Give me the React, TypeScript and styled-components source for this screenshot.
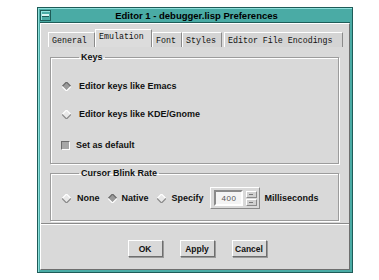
import React from 'react';
import styled, { createGlobalStyle } from 'styled-components';

const Global = createGlobalStyle`
  html, body { margin: 0; padding: 0; background: #ffffff; }
  body { font-family: "Liberation Sans", "DejaVu Sans", sans-serif; font-size: 9px; color: #000; }
`;

const Page = styled.div`
  padding: 7px 0 0 37px;
  width: 379px;
  height: 280px;
  box-sizing: border-box;
`;

const Frame = styled.div`
  width: 316px;
  height: 266px;
  box-sizing: border-box;
  border: 1px solid #1e5c58;
  background: #4aaba5;
  padding: 1px 2px 2px 2px;
  display: flex;
  flex-direction: column;
  box-shadow: inset 1px 1px 0 #8fe0dc;
`;

const TitleBar = styled.div`
  height: 13px;
  display: flex;
  align-items: center;
  border-bottom: 1px solid #1e5c58;
`;

const MenuBox = styled.div`
  width: 11px;
  height: 11px;
  box-sizing: border-box;
  border: 1px solid #1e5c58;
  box-shadow: inset 1px 1px 0 #8fe0dc;
  display: flex;
  align-items: center;
  justify-content: center;
  &::after {
    content: '';
    width: 7px;
    height: 2px;
    background: #d9f5f3;
    border-bottom: 1px solid #1e5c58;
  }
`;

const Title = styled.div`
  flex: 1;
  text-align: center;
  font-weight: bold;
  font-size: 9.5px;
  padding-right: 8px;
  white-space: nowrap;
`;

const Body = styled.div`
  flex: 1;
  background: #d9d9d9;
  border: 1px solid #6e6e6e;
  border-top-color: #ffffff;
  border-left-color: #ffffff;
  display: flex;
  flex-direction: column;
`;

const Tabs = styled.div`
  display: flex;
  align-items: flex-end;
  height: 18px;
  margin-top: 5px;
  padding-left: 7px;
`;

const Tab = styled.div<{ $active?: boolean; $w: number; $gap?: number }>`
  width: ${({ $w }) => $w}px;
  margin-left: ${({ $gap }) => $gap ?? 0}px;
  height: ${({ $active }) => ($active ? 18 : 15)}px;
  box-sizing: border-box;
  padding: 0 3px;
  display: flex;
  align-items: ${({ $active }) => ($active ? 'flex-start' : 'center')};
  padding-top: ${({ $active }) => ($active ? 2 : 0)}px;
  border-left: 1px solid #ffffff;
  border-top: 1px solid #ffffff;
  border-right: 1px solid #8a8a8a;
  background: ${({ $active }) => ($active ? '#dcdcdc' : '#d4d4d4')};
  font-family: "Liberation Mono", "DejaVu Sans Mono", monospace;
  font-size: 8.3px;
  white-space: nowrap;
  overflow: hidden;
  color: #111;
`;

const Panel = styled.div`
  flex: 1;
  display: flex;
  flex-direction: column;
  padding: 5px 10px 0 9px;
  gap: 4px;
`;

const Group = styled.fieldset<{ $h: number }>`
  margin: 0;
  height: ${({ $h }) => $h}px;
  box-sizing: border-box;
  border: 1px solid #9c9c9c;
  box-shadow: 1px 1px 0 #ffffff, inset 1px 1px 0 #ffffff;
  padding: 0 0 0 11px;
  display: flex;
  flex-direction: column;
`;

const Legend = styled.legend`
  padding: 0 2px;
  margin-left: 17px;
  font-size: 9px;
  font-weight: bold;
  color: #111;
`;

const Option = styled.label<{ $top: number; $gap?: number }>`
  display: flex;
  align-items: center;
  gap: ${({ $gap }) => $gap ?? 6}px;
  margin-top: ${({ $top }) => $top}px;
  font-weight: bold;
  font-size: 9px;
  color: #111;
  white-space: nowrap;
`;

const Row = styled.div`
  display: flex;
  align-items: center;
  margin-top: 9px;
  gap: 8px;
`;

const Radio = ({ on }: { on?: boolean }) => (
  <svg width="9" height="9" viewBox="0 0 9 9">
    <polygon points="4.5,0 9,4.5 4.5,9 0,4.5" fill={on ? '#9a9a9a' : '#e8e8e8'} />
    <polyline points="0,4.5 4.5,0 9,4.5" fill="none" stroke={on ? '#6a6a6a' : '#ffffff'} strokeWidth="1.2" />
    <polyline points="0,4.5 4.5,9 9,4.5" fill="none" stroke={on ? '#ffffff' : '#8a8a8a'} strokeWidth="1.2" />
  </svg>
);

const Check = styled.span`
  width: 9px;
  height: 9px;
  box-sizing: border-box;
  background: #a8a8a8;
  border: 1px solid #6e6e6e;
  border-right-color: #ffffff;
  border-bottom-color: #ffffff;
  margin-left: -1px;
`;

const SpinWrap = styled.div`
  display: flex;
  align-items: center;
  margin-left: -2px;
  gap: 3px;
  border: 1px solid #ffffff;
  border-right-color: #8a8a8a;
  border-bottom-color: #8a8a8a;
  padding: 2px 2px 2px 3px;
  height: 22px;
  box-sizing: border-box;
  width: 50px;
`;

const Field = styled.div`
  width: 30px;
  height: 16px;
  box-sizing: border-box;
  background: #f4f4f4;
  border: 2px solid #8a8a8a;
  border-right-color: #ffffff;
  border-bottom-color: #ffffff;
  font-size: 8px;
  color: #555;
  display: flex;
  align-items: center;
  padding-left: 6px;
  letter-spacing: 0.5px;
`;

const Arrows = styled.div`
  display: flex;
  flex-direction: column;
  gap: 1px;
`;

const Arrow = styled.div`
  width: 11px;
  height: 7px;
  box-sizing: border-box;
  border: 1px solid #ffffff;
  border-right-color: #8a8a8a;
  border-bottom-color: #8a8a8a;
  background: #d0d0d0;
  display: flex;
  align-items: center;
  justify-content: center;
  &::after {
    content: '';
    width: 4px;
    height: 1px;
    background: #777;
  }
`;

const Unit = styled.span`
  font-weight: bold;
  font-size: 9px;
  color: #111;
  margin-left: -3px;
`;

const Separator = styled.div`
  height: 0;
  border-top: 1px solid #8a8a8a;
  border-bottom: 1px solid #ffffff;
  margin-top: 2px;
`;

const Buttons = styled.div`
  display: flex;
  justify-content: center;
  gap: 17px;
  padding: 15px 0 0 4px;
`;

const Button = styled.button`
  width: 35px;
  height: 17px;
  box-sizing: border-box;
  padding: 0;
  background: #d9d9d9;
  border: 1px solid #ffffff;
  border-right-color: #6e6e6e;
  border-bottom-color: #6e6e6e;
  box-shadow: 1px 1px 0 #9a9a9a;
  font-family: "Liberation Sans", "DejaVu Sans", sans-serif;
  font-size: 8.5px;
  font-weight: bold;
  color: #111;
`;

export default function App() {
  return (
    <Page>
      <Global />
      <Frame>
        <TitleBar>
          <MenuBox />
          <Title>Editor 1 - debugger.lisp Preferences</Title>
        </TitleBar>
        <Body>
          <Tabs>
            <Tab $w={47}>General</Tab>
            <Tab $w={57} $active>Emulation</Tab>
            <Tab $w={30}>Font</Tab>
            <Tab $w={40}>Styles</Tab>
            <Tab $w={119} $gap={2}>Editor File Encodings</Tab>
          </Tabs>
          <Panel>
            <Group $h={112}>
              <Legend>Keys</Legend>
              <Option $top={19} $gap={8}>
                <Radio on />
                Editor keys like Emacs
              </Option>
              <Option $top={18} $gap={8}>
                <Radio />
                Editor keys like KDE/Gnome
              </Option>
              <Option $top={21} $gap={6}>
                <Check />
                Set as default
              </Option>
            </Group>
            <Group $h={53}>
              <Legend>Cursor Blink Rate</Legend>
              <Row>
                <Option $top={0}>
                  <Radio />
                  None
                </Option>
                <Option $top={0} $gap={5}>
                  <Radio on />
                  Native
                </Option>
                <Option $top={0}>
                  <Radio />
                  Specify
                </Option>
                <SpinWrap>
                  <Field>400</Field>
                  <Arrows>
                    <Arrow />
                    <Arrow />
                  </Arrows>
                </SpinWrap>
                <Unit>Milliseconds</Unit>
              </Row>
            </Group>
          </Panel>
          <Separator />
          <Buttons>
            <Button>OK</Button>
            <Button>Apply</Button>
            <Button>Cancel</Button>
          </Buttons>
          <div style={{ height: 12 }} />
        </Body>
      </Frame>
    </Page>
  );
}
